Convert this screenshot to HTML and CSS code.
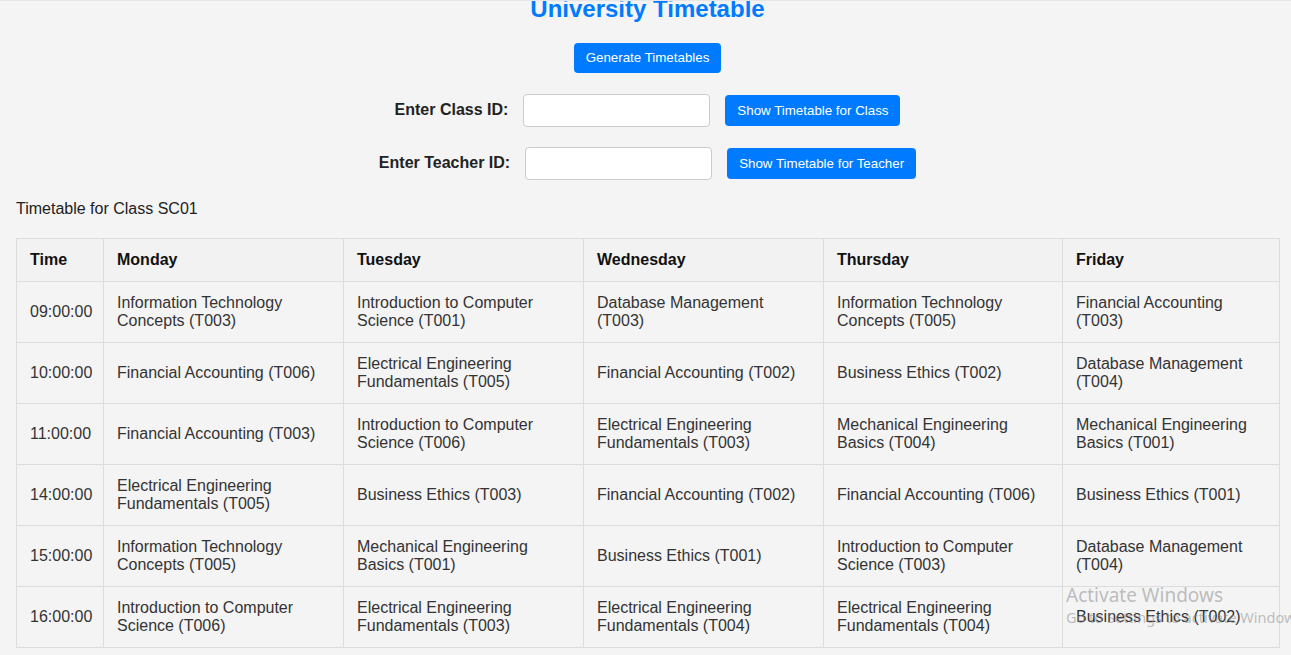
FILE: index.html
```html
<!DOCTYPE html>
<html lang="en">
<head>
<meta charset="utf-8">
<title>University Timetable</title>
<link rel="stylesheet" href="styles.css">
</head>
<body>
<div class="page">
  <h1 class="title">University Timetable</h1>
  <div class="generate-row">
    <button class="btn">Generate Timetables</button>
  </div>
  <div class="form-row">
    <label class="form-label">Enter Class ID:</label>
    <input class="form-input" type="text">
    <button class="btn">Show Timetable for Class</button>
  </div>
  <div class="form-row">
    <label class="form-label">Enter Teacher ID:</label>
    <input class="form-input" type="text">
    <button class="btn">Show Timetable for Teacher</button>
  </div>
  <p class="caption">Timetable for Class SC01</p>
  <table class="timetable">
    <colgroup>
      <col class="c-time"><col class="c-day"><col class="c-day"><col class="c-day"><col class="c-thu"><col class="c-fri">
    </colgroup>
    <thead>
      <tr><th>Time</th><th>Monday</th><th>Tuesday</th><th>Wednesday</th><th>Thursday</th><th>Friday</th></tr>
    </thead>
    <tbody>
      <tr><td>09:00:00</td><td>Information Technology Concepts (T003)</td><td>Introduction to Computer Science (T001)</td><td>Database Management (T003)</td><td>Information Technology Concepts (T005)</td><td>Financial Accounting (T003)</td></tr>
      <tr><td>10:00:00</td><td>Financial Accounting (T006)</td><td>Electrical Engineering Fundamentals (T005)</td><td>Financial Accounting (T002)</td><td>Business Ethics (T002)</td><td>Database Management (T004)</td></tr>
      <tr><td>11:00:00</td><td>Financial Accounting (T003)</td><td>Introduction to Computer Science (T006)</td><td>Electrical Engineering Fundamentals (T003)</td><td>Mechanical Engineering Basics (T004)</td><td>Mechanical Engineering Basics (T001)</td></tr>
      <tr><td>14:00:00</td><td>Electrical Engineering Fundamentals (T005)</td><td>Business Ethics (T003)</td><td>Financial Accounting (T002)</td><td>Financial Accounting (T006)</td><td>Business Ethics (T001)</td></tr>
      <tr><td>15:00:00</td><td>Information Technology Concepts (T005)</td><td>Mechanical Engineering Basics (T001)</td><td>Business Ethics (T001)</td><td>Introduction to Computer Science (T003)</td><td>Database Management (T004)</td></tr>
      <tr><td>16:00:00</td><td>Introduction to Computer Science (T006)</td><td>Electrical Engineering Fundamentals (T003)</td><td>Electrical Engineering Fundamentals (T004)</td><td>Electrical Engineering Fundamentals (T004)</td><td>Business Ethics (T002)</td></tr>
    </tbody>
  </table>
</div>
<div class="watermark">
  <div class="wm-title">Activate Windows</div>
  <div class="wm-sub">Go to Settings to activate Windows.</div>
</div>
</body>
</html>
```

FILE: styles.css
```css
html, body {
  margin: 0;
  padding: 0;
  background: #f4f4f4;
  overflow: hidden;
}
body {
  font-family: "Liberation Sans", Arial, sans-serif;
  color: #333;
  font-size: 16px;
  border-top: 1px solid #e6e6e6;
  height: 654px;
  position: relative;
}
.page {
  padding: 0 12px 0 16px;
}
.title {
  margin: -6px 0 20px;
  font-size: 24px;
  font-weight: bold;
  color: #007bff;
  text-align: center;
  line-height: 27.6px;
}
.generate-row {
  display: flex;
  justify-content: center;
  margin-bottom: 21px;
}
.btn {
  background: #007bff;
  color: #fff;
  border: none;
  border-radius: 4px;
  font-family: "Liberation Sans", Arial, sans-serif;
  font-size: 13.333px;
  padding: 8px 12px;
  line-height: 15px;
  cursor: pointer;
}
.generate-row .btn {
  padding: 7px 12px 8px;
}
.form-row {
  display: flex;
  justify-content: center;
  align-items: center;
  gap: 15px;
  margin-bottom: 20px;
}
.form-label {
  font-weight: bold;
  color: #222;
  font-size: 16px;
}
.form-input {
  box-sizing: border-box;
  width: 187px;
  height: 33px;
  border: 1px solid #ccc;
  border-radius: 4px;
  background: #fff;
  margin: 0;
  padding: 6px 8px;
}
.caption {
  margin: 0 0 20px;
  font-size: 16px;
  color: #222;
}
.timetable {
  width: 1263px;
  table-layout: fixed;
  border-collapse: collapse;
  background: #f4f4f4;
}
.c-time { width: 87px; }
.c-day { width: 240px; }
.c-thu { width: 239px; }
.c-fri { width: 217px; }
.timetable th,
.timetable td {
  border: 1px solid #ddd;
  padding: 12px 11px 12px 13px;
  text-align: left;
  vertical-align: middle;
  font-size: 16px;
  line-height: 18px;
}
.timetable th {
  font-weight: bold;
  color: #111;
  background: #f2f2f2;
}
.timetable td {
  color: #333;
}
.watermark {
  position: absolute;
  left: 1066px;
  top: 582px;
  color: rgba(140, 140, 140, 0.55);
  font-family: "Noto Sans", "Open Sans", sans-serif;
  white-space: nowrap;
  pointer-events: none;
}
.wm-title {
  font-size: 19px;
  line-height: 24px;
}
.wm-sub {
  font-size: 14.5px;
  line-height: 20px;
}
```
